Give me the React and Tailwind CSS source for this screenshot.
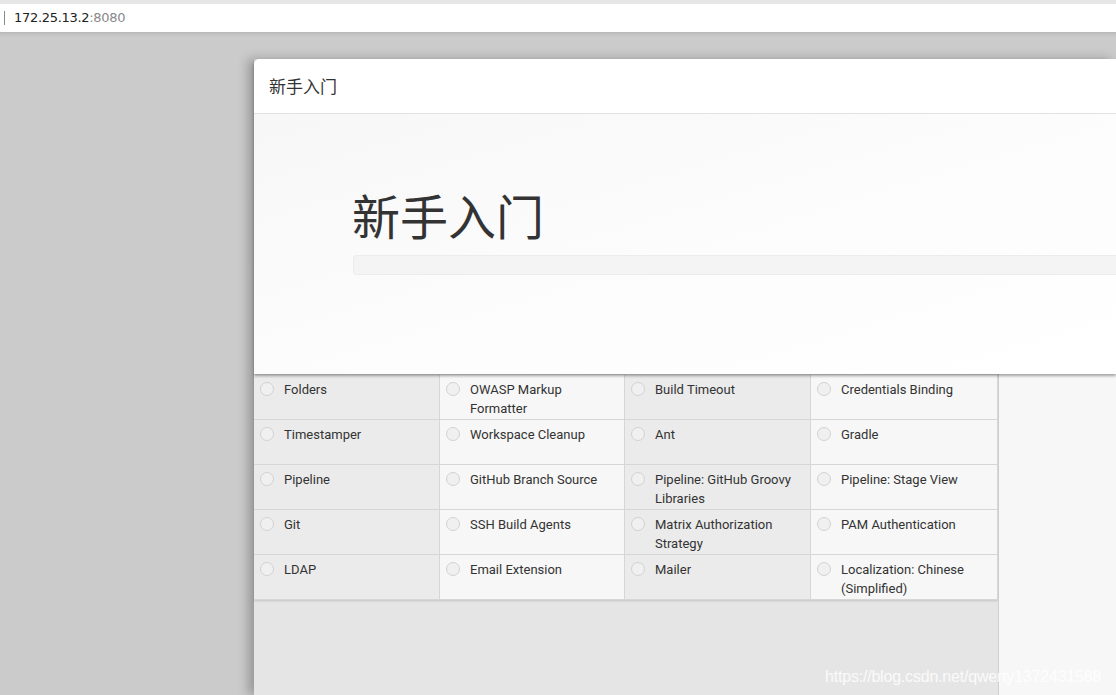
import React from "react";

const plugins = [
  "Folders",
  "OWASP Markup Formatter",
  "Build Timeout",
  "Credentials Binding",
  "Timestamper",
  "Workspace Cleanup",
  "Ant",
  "Gradle",
  "Pipeline",
  "GitHub Branch Source",
  "Pipeline: GitHub Groovy Libraries",
  "Pipeline: Stage View",
  "Git",
  "SSH Build Agents",
  "Matrix Authorization Strategy",
  "PAM Authentication",
  "LDAP",
  "Email Extension",
  "Mailer",
  "Localization: Chinese (Simplified)",
];

const PluginCell = ({ name, index }) => {
  const col = index % 4;
  const shade = col % 2 === 0 ? "bg-[#ebebeb]" : "bg-[#f7f7f7]";
  return (
    <div className={`${shade} h-[45px] flex items-start border-r border-b border-[#d6d6d6] pl-[6px] pt-[7px]`}>
      <span className="w-[14px] h-[14px] rounded-full border-[1.5px] border-[#d2d2d2] bg-[#f0f0f0] shrink-0" />
      <span className="ml-[10px] pr-2 text-[13px] leading-[19px] text-[#333] -mt-[2px]">{name}</span>
    </div>
  );
};

const App = () => {
  return (
    <div className="w-[1116px] h-[695px] overflow-hidden bg-[#cbcbcb] font-['Roboto','Noto_Sans_CJK_SC',sans-serif] relative">
      {/* address bar */}
      <div className="h-[4px] bg-[#e6e6e6]" />
      <div className="h-[29px] bg-white flex items-center border-b border-[#b9b9b9]">
        <span className="ml-[4px] w-px h-[14px] bg-[#888]" />
        <span className="ml-[9px] text-[13px] font-['DejaVu_Sans',sans-serif] tracking-[-0.3px] text-[#222]">
          172.25.13.2<span className="text-[#888]">:8080</span>
        </span>
      </div>
      <div className="h-[4px] bg-gradient-to-b from-[#bdbdbd] to-[#cbcbcb]" />

      <div className="flex pt-[22px]">
        <div className="w-[254px] shrink-0" />
        <div className="flex-1 relative shadow-[-6px_0_10px_rgba(0,0,0,0.25)]">
          {/* dialog */}
          <div className="relative z-10 bg-white rounded-tl-[5px] shadow-[0_2px_3px_rgba(0,0,0,0.35)]">
            <div className="h-[55px] flex items-center pl-[15px] border-b border-[#e2e2e2]">
              <span className="text-[17px] text-[#333] font-['Noto_Sans_CJK_SC',sans-serif]">新手入门</span>
            </div>
            <div className="h-[260px] bg-gradient-to-br from-[#f7f7f7] via-[#fcfcfc] to-white pl-[99px] pt-[70px]">
              <h1 className="text-[48px] leading-[60px] text-[#333] font-['Noto_Sans_CJK_SC',sans-serif] -ml-px">新手入门</h1>
              <div className="mt-[11px] h-[20px] rounded-l-[4px] bg-[#f4f4f4] border border-[#ececec] border-r-0" />
            </div>
          </div>

          {/* plugin grid */}
          <div className="flex">
            <div className="w-[744px] bg-[#e5e5e5] h-[321px] pt-px">
              <div className="grid grid-cols-[186px_185px_186px_187px] shadow-[0_1px_2px_rgba(0,0,0,0.15)]">
                {plugins.map((p, i) => (
                  <PluginCell key={p} name={p} index={i} />
                ))}
              </div>
            </div>
            <div className="flex-1 bg-[#f7f7f7] border-l border-[#cfcfcf]" />
          </div>
        </div>
      </div>

      <div className="absolute left-[825px] top-[665px] text-[16px] text-white/80 font-['Liberation_Sans',sans-serif] tracking-[-0.2px]">
        https://blog.csdn.net/qwerty1372431588
      </div>
    </div>
  );
};

export default App;
